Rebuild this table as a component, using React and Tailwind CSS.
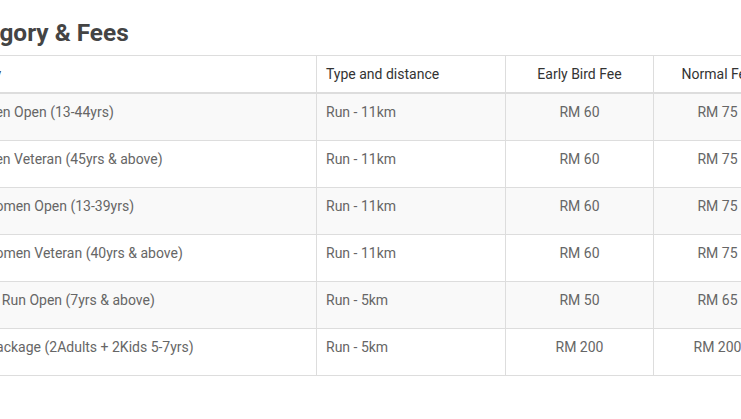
// Tableau des catégories et frais d'inscription

const rows = [
  { category: '11KM Men Open (13-44yrs)', type: 'Run - 11km', early: 'RM 60', normal: 'RM 75' },
  { category: '11KM Men Veteran (45yrs & above)', type: 'Run - 11km', early: 'RM 60', normal: 'RM 75' },
  { category: '11KM Women Open (13-39yrs)', type: 'Run - 11km', early: 'RM 60', normal: 'RM 75' },
  { category: '11KM Women Veteran (40yrs & above)', type: 'Run - 11km', early: 'RM 60', normal: 'RM 75' },
  { category: '5KM Fun Run Open (7yrs & above)', type: 'Run - 5km', early: 'RM 50', normal: 'RM 65' },
  { category: 'Family Package (2Adults + 2Kids 5-7yrs)', type: 'Run - 5km', early: 'RM 200', normal: 'RM 200' },
]

export default function App() {
  return (
    <div className="w-[741px] h-[419px] overflow-hidden bg-white font-['Roboto',sans-serif]">
      <div className="-ml-[65px] pt-[18px]">
        {/* Titre */}
        <h2 className="ml-[14px] mb-[7px] text-[24.4px] leading-[30px] font-bold text-[#444]">
          Category &amp; Fees
        </h2>

        {/* Tableau */}
        <table className="table-fixed border-separate border-spacing-0 w-[847px] text-[14px] leading-5">
          <colgroup>
            <col className="w-[382px]" />
            <col className="w-[189px]" />
            <col className="w-[148px]" />
            <col className="w-[128px]" />
          </colgroup>
          <thead>
            <tr className="text-[#333]">
              <th className="h-[39px] px-[9px] border-t border-l border-r border-b-2 border-[#ddd] font-normal text-left">Category</th>
              <th className="h-[39px] px-[9px] border-t border-r border-b-2 border-[#ddd] font-normal text-left">Type and distance</th>
              <th className="h-[39px] px-[9px] border-t border-r border-b-2 border-[#ddd] font-normal text-center">Early Bird Fee</th>
              <th className="h-[39px] px-[9px] border-t border-r border-b-2 border-[#ddd] font-normal text-center">Normal Fee</th>
            </tr>
          </thead>
          <tbody className="text-[#666]">
            {rows.map((r, i) => (
              <tr key={i} className={i % 2 === 0 ? 'bg-[#f9f9f9]' : 'bg-white'}>
                <td className="h-[47px] align-top pt-2 pl-[7px] pr-[9px] border-l border-r border-b border-[#ddd] whitespace-nowrap">{r.category}</td>
                <td className="h-[47px] align-top pt-2 px-[9px] border-r border-b border-[#ddd]">{r.type}</td>
                <td className="h-[47px] align-top pt-2 px-[9px] border-r border-b border-[#ddd] text-center">{r.early}</td>
                <td className="h-[47px] align-top pt-2 px-[9px] border-r border-b border-[#ddd] text-center">{r.normal}</td>
              </tr>
            ))}
          </tbody>
        </table>
      </div>
    </div>
  )
}
